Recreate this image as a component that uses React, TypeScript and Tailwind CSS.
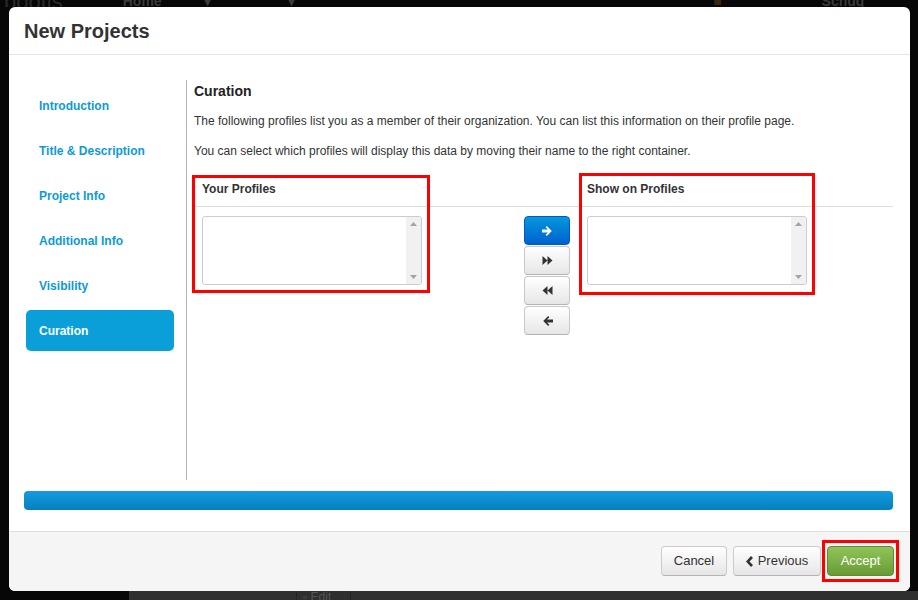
import type { ReactNode } from "react";

const FONT = { fontFamily: '"Liberation Sans", Arial, sans-serif' };

const steps = ["Introduction", "Title & Description", "Project Info", "Additional Info", "Visibility", "Curation"];

function ListBox() {
  return (
    <div className="flex h-[69px] w-[220px] overflow-hidden rounded-[3px] border border-[#cccccc] bg-white">
      <div className="flex-1" />
      <div className="flex w-[15px] flex-col items-center justify-between bg-[#f1f1f1] py-[5px]">
        <svg width="7" height="4" viewBox="0 0 7 4">
          <path d="M0 4 L3.5 0 L7 4 Z" fill="#a3a3a3" />
        </svg>
        <svg width="7" height="4" viewBox="0 0 7 4">
          <path d="M0 0 L7 0 L3.5 4 Z" fill="#a3a3a3" />
        </svg>
      </div>
    </div>
  );
}

function MoveButton({ primary, children }: { primary?: boolean; children: ReactNode }) {
  return (
    <button
      className={
        primary
          ? "flex h-[29px] w-[46px] items-center justify-center rounded-[4px] border border-[#0058c0] bg-gradient-to-b from-[#0a98dc] to-[#0060cf]"
          : "flex h-[29px] w-[46px] items-center justify-center rounded-[4px] border border-[#c8c8c8] border-b-[#b3b3b3] bg-gradient-to-b from-white to-[#e6e6e6]"
      }
    >
      {children}
    </button>
  );
}

function FooterButton({ children, className }: { children: ReactNode; className: string }) {
  return (
    <button className={"flex h-[30px] items-center justify-center rounded-[4px] text-[13px] " + className}>
      {children}
    </button>
  );
}

export default function App() {
  return (
    <div className="relative h-[600px] w-[918px] overflow-hidden bg-[#070707]" style={FONT}>
      {/* dimmed page behind the dialog */}
      <div className="flex h-[7px] items-end overflow-hidden text-[14px] font-bold leading-[14px] text-[#3a3a3a]">
        <span className="ml-[4px] mb-[-2px] text-[22px] font-normal text-[#2a2a2a]">pootis</span>
        <span className="ml-[60px] mb-[-1px]">⌂ Home</span>
        <span className="ml-[30px] mb-[-1px]">▪ Apps ▾</span>
        <span className="ml-[30px] mb-[-1px]">● Help &amp; Support ▾</span>
        <span className="ml-[300px] mb-[-1px] text-[#3b2410]">■</span>
        <span className="ml-[100px] mb-[-1px]">Kevin a Schug</span>
      </div>
      <div className="absolute bottom-0 left-[129px] right-0 flex h-[9px] bg-[#2f2f2f]">
        <div className="ml-[167px] w-[55px] border-x border-[#242424] text-[12px] leading-[12px] text-[#555]">
          <span className="ml-[6px]">▫ Edit</span>
        </div>
      </div>

      {/* dialog */}
      <div className="absolute left-[9px] top-[7px] flex h-[584px] w-[901px] flex-col overflow-hidden rounded-[6px] bg-white">
        <div className="flex h-[48px] items-center border-b border-[#e5e5e5] px-[15px]">
          <h1 className="text-[20px] font-bold text-[#333333]">New Projects</h1>
        </div>

        <div className="flex flex-1 flex-col pl-[15px] pr-[17px] pt-[25px]">
          <div className="flex h-[400px]">
            <div className="ml-[2px] flex w-[148px] flex-col gap-[4px] pt-[5px]">
              {steps.map((s) => (
                <div
                  key={s}
                  className={
                    s === "Curation"
                      ? "flex h-[41px] items-center rounded-[5px] bg-[#0a9fd9] px-[13px] text-[12px] font-bold text-white"
                      : "flex h-[41px] items-center px-[13px] text-[12px] font-bold text-[#0d9ad6]"
                  }
                >
                  {s}
                </div>
              ))}
            </div>

            <div className="ml-[12px] flex flex-1 flex-col border-l border-[#b5b5b5] pl-[7px]">
              <h2 className="mt-[1px] text-[14px] font-bold leading-[20px] text-[#222]">Curation</h2>
              <p className="mt-[10px] text-[12px] leading-[20px] text-[#333]">
                The following profiles list you as a member of their organization. You can list this information on their profile page.
              </p>
              <p className="mt-[10px] text-[12px] leading-[20px] text-[#333]">
                You can select which profiles will display this data by moving their name to the right container.
              </p>

              <div className="relative ml-[-2px] mt-[14px]">
                <div className="flex h-[32px] border-b border-[#dddddd] text-[12px] font-bold text-[#333]">
                  <div className="w-[238px] pl-[10px] pt-[5px]">Your Profiles</div>
                  <div className="w-[149px]" />
                  <div className="pl-[8px] pt-[5px]">Show on Profiles</div>
                </div>
                <div className="flex pt-[9px]">
                  <div className="w-[238px] pl-[10px]">
                    <ListBox />
                  </div>
                  <div className="flex w-[149px] flex-col gap-[1px] pl-[94px]">
                    <MoveButton primary>
                      <svg width="11" height="10" viewBox="0 0 11 10">
                        <path d="M0 3.6 H6 L3.6 1.2 L4.8 0 L9.8 5 L4.8 10 L3.6 8.8 L6 6.4 H0 Z" fill="#fff" />
                      </svg>
                    </MoveButton>
                    <MoveButton>
                      <svg width="11" height="9" viewBox="0 0 11 9">
                        <path d="M0.5 0 L5.5 4.5 L0.5 9 Z M5.5 0 L10.5 4.5 L5.5 9 Z" fill="#333" />
                      </svg>
                    </MoveButton>
                    <MoveButton>
                      <svg width="11" height="9" viewBox="0 0 11 9">
                        <path d="M10.5 0 L5.5 4.5 L10.5 9 Z M5.5 0 L0.5 4.5 L5.5 9 Z" fill="#333" />
                      </svg>
                    </MoveButton>
                    <MoveButton>
                      <svg width="11" height="10" viewBox="0 0 11 10">
                        <path d="M11 3.6 H5 L7.4 1.2 L6.2 0 L1.2 5 L6.2 10 L7.4 8.8 L5 6.4 H11 Z" fill="#333" />
                      </svg>
                    </MoveButton>
                  </div>
                  <div className="pl-[8px]">
                    <ListBox />
                  </div>
                </div>

                {/* annotation boxes */}
                <div className="pointer-events-none absolute left-0 top-0 h-[118px] w-[238px] border-[3px] border-[#ff0000]" />
                <div className="pointer-events-none absolute left-[387px] top-[-2px] h-[122px] w-[236px] border-[3px] border-[#ff0000]" />
              </div>
            </div>
          </div>

          <div className="mt-[11px] h-[19px] rounded-[4px] bg-gradient-to-b from-[#149bdf] to-[#0480be]" />
        </div>

        <div className="flex h-[60px] justify-end gap-[6px] border-t border-[#dddddd] bg-[#f5f5f5] pr-[16px] pt-[14px] text-[#333]">
          <FooterButton className="w-[66px] border border-[#cccccc] border-b-[#b3b3b3] bg-gradient-to-b from-white to-[#e6e6e6]">
            Cancel
          </FooterButton>
          <FooterButton className="w-[88px] gap-[5px] border border-[#cccccc] border-b-[#b3b3b3] bg-gradient-to-b from-white to-[#e6e6e6]">
            <svg width="7" height="11" viewBox="0 0 7 11">
              <path d="M5 0 L7 2 L3.5 5.5 L7 9 L5 11 L0 5.5 Z" fill="#333" />
            </svg>
            Previous
          </FooterButton>
          <div className="relative">
            <FooterButton className="w-[67px] border border-[#5f8a30] bg-gradient-to-b from-[#90c55a] to-[#6a9b35] text-white">
              Accept
            </FooterButton>
            <div className="pointer-events-none absolute left-[-5px] top-[-6px] h-[42px] w-[77px] border-[3px] border-[#ff0000]" />
          </div>
        </div>
      </div>
    </div>
  );
}
